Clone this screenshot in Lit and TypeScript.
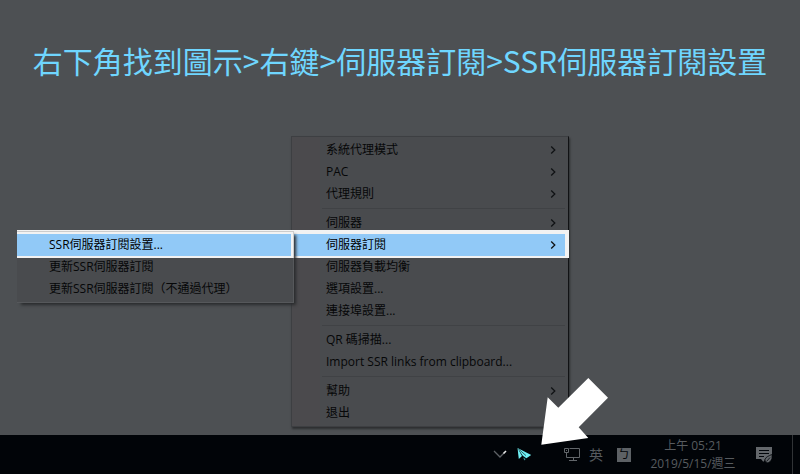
import { LitElement, html, css, svg, nothing } from "lit";
import { customElement } from "lit/decorators.js";
import { classMap } from "lit/directives/class-map.js";

interface Entry {
  label: string;
  selected?: boolean;
  more?: boolean;
  children?: Entry[];
}

const MENU: Entry[][] = [
  [
    { label: "系統代理模式", more: true },
    { label: "PAC", more: true },
    { label: "代理規則", more: true },
  ],
  [
    { label: "伺服器", more: true },
    {
      label: "伺服器訂閱",
      more: true,
      selected: true,
      children: [
        { label: "SSR伺服器訂閱設置...", selected: true },
        { label: "更新SSR伺服器訂閱" },
        { label: "更新SSR伺服器訂閱（不通過代理）" },
      ],
    },
    { label: "伺服器負載均衡" },
    { label: "選項設置..." },
    { label: "連接埠設置..." },
  ],
  [{ label: "QR 碼掃描..." }, { label: "Import SSR links from clipboard..." }],
  [{ label: "幫助", more: true }, { label: "退出" }],
];

@customElement("tray-menu")
export class TrayMenu extends LitElement {
  static styles = css`
    :host {
      display: block;
      font: 12px/22px "Open Sans", "Noto Sans CJK TC", sans-serif;
      color: #060708;
    }
    ul {
      list-style: none;
      margin: 0;
      padding: 2px;
      box-sizing: border-box;
      border: 1px solid #3d3f42;
    }
    .main {
      width: 278px;
      padding-right: 3px;
      border-right-color: #111214;
      background: linear-gradient(to right, #4b4a4d 28px, #494b4e 28px);
      box-shadow: 1px 2px 2px #2d2f31;
    }
    .sub {
      position: absolute;
      right: 271px;
      top: -3px;
      width: 277px;
      padding-left: 0;
      border-left: 0;
      border-color: #56585b;
      background: #494b4e;
      box-shadow: 3px 3px 3px -1px #292b2d;
    }
    li {
      position: relative;
    }
    .rule {
      height: 1px;
      margin: 3px 0 3px 28px;
      background: #404245;
    }
    button {
      display: flex;
      align-items: center;
      justify-content: space-between;
      width: 100%;
      height: 22px;
      padding: 0 9px 0 32px;
      border: 0;
      background: none;
      color: inherit;
      font: inherit;
      text-align: left;
      white-space: nowrap;
    }
    .selected > button {
      background: #91c9f7;
      color: #000;
      box-shadow: 4px -4px #f2f2f2, 0 -4px #f2f2f2, 4px 2px #f2f2f2, 0 2px #f2f2f2;
    }
    .sub .selected > button {
      box-shadow: 0 -2px #f2f2f2, 0 2px #f2f2f2, 2px -2px #f2f2f2, 2px 2px #f2f2f2,
        0 -3px #cccccc, 3px -3px #cccccc, 3px 2px #cccccc, 0 -4px #f2f2f2, 3px -4px #f2f2f2;
    }
    .selected {
      z-index: 1;
    }
    svg {
      flex: none;
      fill: none;
      stroke: #101214;
      stroke-width: 1.3;
    }
  `;

  private entry(e: Entry): unknown {
    return html`<li class=${classMap({ selected: !!e.selected })} role="none">
      <button role="menuitem">
        <span>${e.label}</span>
        ${e.more
          ? html`<svg width="6" height="8" viewBox="0 0 6 8" aria-hidden="true">
              <path d="M1.2 .5 4.8 4 1.2 7.5" />
            </svg>`
          : nothing}
      </button>
      ${e.children
        ? html`<ul class="sub" role="menu">${e.children.map((c) => this.entry(c))}</ul>`
        : nothing}
    </li>`;
  }

  render() {
    return html`<ul class="main" role="menu">
      ${MENU.map(
        (group, i) => html`${i ? html`<li class="rule" role="separator"></li>` : nothing}
        ${group.map((e) => this.entry(e))}`
      )}
    </ul>`;
  }
}

const icons = {
  chevron: svg`<path d="M2 5 8 11 12 7" fill="none" stroke="#5d6165" stroke-width="1.3"/>
    <path d="M11.5 7.5 14 5" fill="none" stroke="#e8e8e8" stroke-width="1.6"/>`,
  plane: svg`<path d="M1.5 2 2.8 13 6 10Z" fill="#6ff0f4"/>
    <path d="M1.5 2 6.8 9.8 10.4 12.2 15.2 9Z" fill="#6ff0f4"/>
    <path d="M3 3.4 10 9.6" stroke="#02060a" stroke-width=".6"/>
    <path d="M7.2 11.6 9.6 13 8.4 14.6Z" fill="#3a9a9e"/>`,
  network: svg`<path d="M5.5 2.5H15.5V11.5H2.5V7M9.5 11.5V14.5M5 14.5H13" fill="none" stroke="#62666a"/>
    <path d="M.5 2.5H4.5V6.5H.5Z" fill="none" stroke="#62666a"/>
    <path d="M2 4H3V5H2Z" fill="#62666a"/>`,
  note: svg`<path d="M0 1H16V13H9L8 15.5H7L5 13H0Z" fill="#63676b"/>
    <path d="M3 4.5H13M3 7.5H13M3 10.5H8" stroke="#02060a"/>
    <path d="M9 13.5C10 10.5 13 10 15.8 8.5C16.8 12 15 16.5 11.5 16.8C9.6 16.6 9 15 9 13.5Z" fill="#63676b" stroke="#02060a" stroke-width=".8"/>
    <path d="M10.5 15.5 14 11.5" stroke="#02060a" stroke-width=".8"/>`,
};

@customElement("task-bar")
export class TaskBar extends LitElement {
  static styles = css`
    :host {
      display: flex;
      justify-content: flex-end;
      height: 39px;
      background: #010408;
      color: #575b5f;
      font: 12px/18px "Open Sans", "Noto Sans CJK TC", sans-serif;
    }
    button {
      display: grid;
      place-items: center;
      width: 24px;
      padding: 0;
      border: 0;
      background: none;
      color: inherit;
      font: inherit;
      white-space: nowrap;
    }
    .plane {
      margin-right: 24px;
    }
    .lang {
      font-size: 14px;
    }
    .ime {
      width: 32px;
    }
    .key {
      width: 14px;
      height: 14px;
      background: #5d6165;
      color: #010408;
      font-size: 12px;
      line-height: 14px;
    }
    .clock {
      width: 106px;
      align-content: center;
    }
    .notes {
      width: 36px;
      margin-right: 10px;
    }
    .desktop {
      width: 8px;
      border-left: 1px solid #303336;
    }
  `;

  private icon(shape: unknown) {
    return html`<svg width="16" height="17" viewBox="0 0 16 17" overflow="visible" aria-hidden="true">${shape}</svg>`;
  }

  render() {
    return html`
      <button aria-label="顯示隱藏的圖示">${this.icon(icons.chevron)}</button>
      <button class="plane" aria-label="SSR">${this.icon(icons.plane)}</button>
      <button aria-label="網路">${this.icon(icons.network)}</button>
      <button class="lang">英</button>
      <button class="ime"><span class="key">ㄅ</span></button>
      <button class="clock"><span>上午 05:21</span><span>2019/5/15/週三</span></button>
      <button class="notes" aria-label="通知">${this.icon(icons.note)}</button>
      <button class="desktop" aria-label="桌面"></button>
    `;
  }
}

@customElement("app-root")
export class AppRoot extends LitElement {
  static styles = css`
    :host {
      position: relative;
      display: flex;
      flex-direction: column;
      justify-content: space-between;
      min-height: 100vh;
      background: #4d5053;
      overflow: hidden;
    }
    h1 {
      margin: 38px 0 0;
      font: 400 30px/44px "Noto Sans CJK TC", sans-serif;
      color: #6fd6ff;
      text-align: center;
    }
    tray-menu {
      position: absolute;
      right: 231px;
      bottom: 47px;
    }
    .arrow {
      position: absolute;
      right: 190px;
      bottom: 27px;
      z-index: 2;
    }
  `;

  render() {
    return html`
      <h1>右下角找到圖示&gt;右鍵&gt;伺服器訂閱&gt;SSR伺服器訂閱設置</h1>
      <tray-menu></tray-menu>
      <task-bar></task-bar>
      <svg class="arrow" width="70" height="70" viewBox="0 0 70 70" aria-hidden="true">
        <path d="M48.3 8 68 27.7 38.7 57.3 48.3 68 1.3 74.7 7.7 27.3 18.3 37.7Z" transform="translate(0 -7)" fill="#fff" />
      </svg>
    `;
  }
}
